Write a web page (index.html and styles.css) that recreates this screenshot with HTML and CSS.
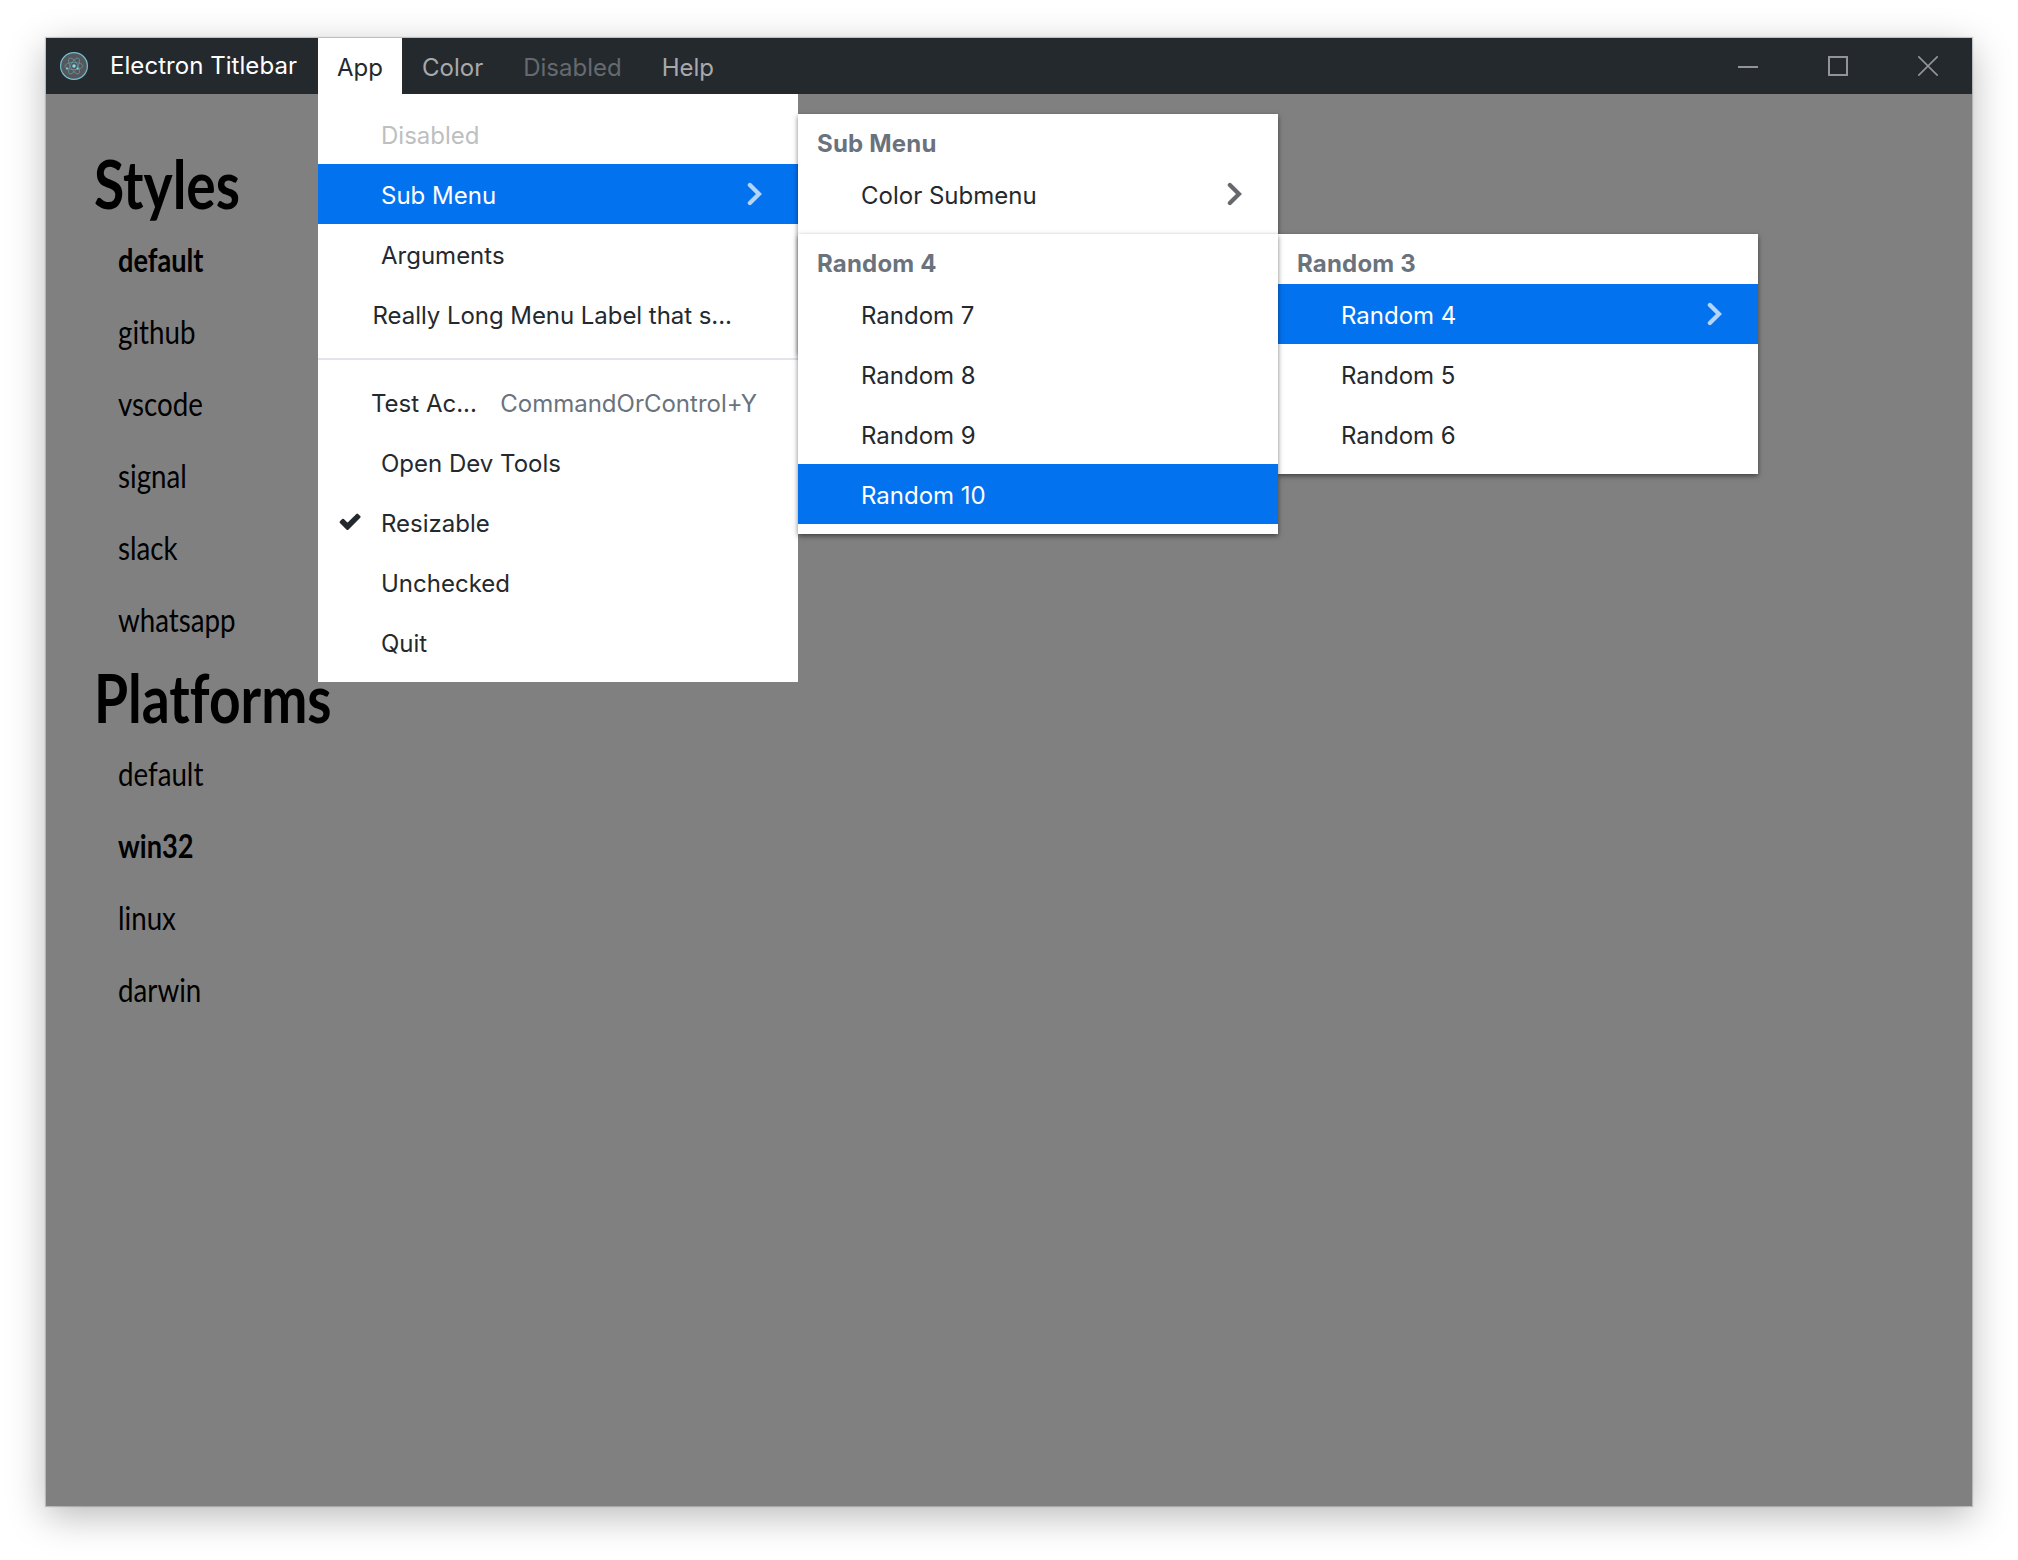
FILE: index.html
```
<!DOCTYPE html>
<html lang="en">
<head>
<meta charset="utf-8">
<title>Electron Titlebar</title>
<link rel="stylesheet" href="styles.css">
</head>
<body>
<svg width="0" height="0" class="defs">
  <symbol id="chevron" viewBox="0 0 16 24"><path d="M3.9 3l9.1 9-9.1 9" fill="none" stroke="currentColor" stroke-width="4.3" stroke-linecap="round" stroke-linejoin="miter"/></symbol>
</svg>
<div class="window">
  <header class="titlebar">
    <svg class="logo" viewBox="0 0 28 28">
      <circle cx="14" cy="14" r="13.4" fill="#55585a" stroke="#74bfd1" stroke-width="1.2"/>
      <g fill="none" stroke="#6aa3b0" stroke-width=".6">
        <ellipse cx="14" cy="14" rx="9" ry="3.6"/>
        <ellipse cx="14" cy="14" rx="9" ry="3.6" transform="rotate(60 14 14)"/>
        <ellipse cx="14" cy="14" rx="9" ry="3.6" transform="rotate(120 14 14)"/>
      </g>
      <g fill="#86dcef"><circle cx="14" cy="14" r="1.7"/><circle cx="7" cy="16.4" r="1"/><circle cx="17.6" cy="16.6" r="1"/></g>
    </svg>
    <div class="title">Electron Titlebar</div>
    <nav class="menubar">
      <div class="tab open">App</div>
      <div class="tab">Color</div>
      <div class="tab disabled">Disabled</div>
      <div class="tab">Help</div>
    </nav>
    <div class="controls">
      <svg viewBox="0 0 20 20"><path d="M0 11h20"/></svg>
      <svg viewBox="0 0 20 20"><path d="M1 1h18v18H1z"/></svg>
      <svg viewBox="0 0 20 20"><path d="M.3.3l19.4 19.4M19.7.3L.3 19.7" class="thin"/></svg>
    </div>
  </header>
  <main class="content">
    <h1><span>Styles</span></h1>
    <ul>
      <li class="current"><span>default</span></li>
      <li><span>github</span></li>
      <li><span>vscode</span></li>
      <li><span>signal</span></li>
      <li><span>slack</span></li>
      <li><span>whatsapp</span></li>
    </ul>
    <h1><span>Platforms</span></h1>
    <ul>
      <li><span>default</span></li>
      <li class="current"><span>win32</span></li>
      <li><span>linux</span></li>
      <li><span>darwin</span></li>
    </ul>
  </main>

  <div class="menu menu-app">
    <div class="item disabled">Disabled</div>
    <div class="item selected">Sub Menu<svg class="chevron"><use href="#chevron"/></svg></div>
    <div class="item">Arguments</div>
    <div class="item truncated">Really Long Menu Label that s...</div>
    <div class="separator"></div>
    <div class="item truncated accelerated">Test Ac...<span class="accelerator">CommandOrControl+Y</span></div>
    <div class="item">Open Dev Tools</div>
    <div class="item"><svg class="check" viewBox="0 0 22 18"><path d="M4 5.9L1.8 8.1 8.5 14.8 20.4 2.9 18.2.8 8.5 10.4z" fill="currentColor" stroke="currentColor" stroke-width="2.4" stroke-linejoin="round"/></svg>Resizable</div>
    <div class="item">Unchecked</div>
    <div class="item">Quit</div>
  </div>

  <div class="menu submenu menu-sub">
    <div class="heading">Sub Menu</div>
    <div class="item">Color Submenu<svg class="chevron"><use href="#chevron"/></svg></div>
  </div>

  <div class="menu submenu menu-random-3">
    <div class="heading">Random 3</div>
    <div class="item selected">Random 4<svg class="chevron"><use href="#chevron"/></svg></div>
    <div class="item">Random 5</div>
    <div class="item">Random 6</div>
  </div>

  <div class="menu submenu menu-random-4">
    <div class="heading">Random 4</div>
    <div class="item">Random 7</div>
    <div class="item">Random 8</div>
    <div class="item">Random 9</div>
    <div class="item selected">Random 10</div>
  </div>
</div>
</body>
</html>
```
FILE: styles.css
```
* { box-sizing: border-box; }

body {
  margin: 0;
  height: 1560px;
  padding: 38px 46px 54px;
  overflow: hidden;
  background: #fff;
  font: 24px/60px Inter, "Liberation Sans", sans-serif;
  color: #24292e;
}

.defs { position: absolute; }

.window {
  position: relative;
  height: 1468px;
  background: #808080;
  box-shadow: 0 0 1px 1px rgba(0, 0, 0, .18), 0 10px 36px rgba(0, 0, 0, .28);
}

/* Title bar */
.titlebar {
  display: flex;
  align-items: center;
  height: 56px;
  padding: 0 34px 0 14px;
  background: #24292e;
}
.logo { width: 28px; height: 28px; }
.title {
  width: 208px;
  margin-left: 22px;
  line-height: 56px;
  letter-spacing: .05px;
  color: #fff;
}
.menubar { display: flex; height: 56px; }
.tab {
  padding: 2px 20px 0;
  line-height: 56px;
  height: 56px;
  color: #a7a9ab;
}
.tab.open { width: 84px; padding: 2px 0 0 19px; background: #fff; color: #24292e; }
.tab.disabled { color: #66696d; }
.controls { display: flex; gap: 70px; margin-left: auto; }
.controls svg { width: 20px; height: 20px; display: block; }
.controls path { fill: none; stroke: #929497; stroke-width: 2; }
.controls .thin { stroke-width: 1.6; }

/* Page behind the menus */
.content {
  padding: 48px 0 0 48px;
  font-family: Lato, "Liberation Sans", sans-serif;
  font-variant-ligatures: none;
  color: #000;
}
h1 { margin: 0; font-size: 67px; line-height: 82px; font-weight: 700; }
ul { margin: 0; padding: 0 0 0 24px; list-style: none; }
li { font-size: 32px; line-height: 72px; height: 72px; }
.content span { display: inline-block; transform: scaleX(.866); transform-origin: 0 50%; }
.content li.current { font-weight: 700; }
.content li.current span { transform: scaleX(.85); }
.content h1 span { transform: scaleX(.823); }

/* Menus */
.menu {
  position: absolute;
  width: 480px;
  padding: 10px 0;
  background: #fff;
}
.menu-app { left: 272px; top: 56px; }
.submenu { box-shadow: 0 2px 5px rgba(0, 0, 0, .5); }
.menu-sub { left: 752px; top: 76px; height: 240px; }
.menu-random-3 { left: 1232px; top: 196px; }
.menu-random-4 { left: 752px; top: 196px; }

.item {
  position: relative;
  display: flex;
  height: 60px;
  padding: 2px 36px 0 63px;
  line-height: 60px;
  white-space: pre;
}
.item.disabled { color: #bdbfc0; }
.item.selected { background: #0372ef; color: #fff; }
.item.truncated { padding-left: 54.5px; letter-spacing: -.05px; }
.item.accelerated { justify-content: space-between; padding: 2px 41px 0 53px; letter-spacing: 0; }
.accelerator { color: #6a737d; }
.heading {
  height: 40px;
  padding-left: 19px;
  line-height: 40px;
  font-weight: 700;
  letter-spacing: .2px;
  color: #6a737d;
}
.separator { height: 2px; margin: 14px 0 12px; background: #e1e4e8; }

.chevron { width: 16px; height: 24px; margin: 16px 0 0 auto; opacity: .7; }
.check { position: absolute; left: 21px; top: 22px; width: 22px; height: 18px; overflow: visible; }
```
